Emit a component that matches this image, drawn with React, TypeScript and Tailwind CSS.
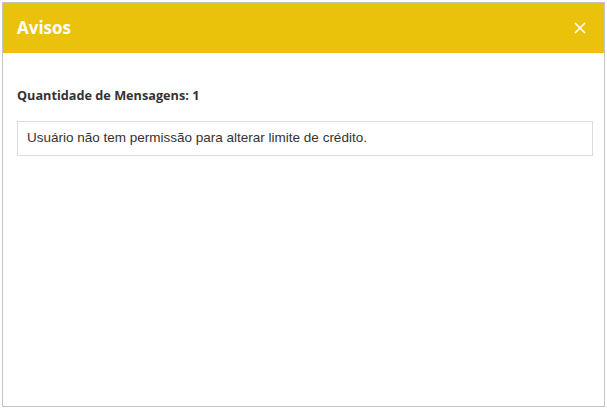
import React from "react";

export default function App() {
  return (
    <div className="w-[607px] h-[409px] bg-white p-[2px]">
      <div className="flex h-[405px] w-[603px] flex-col border border-[#c4c4c4] bg-white">
        <div className="flex h-[50px] items-center justify-between bg-[#ebc20b] pl-[14px] pr-[16px]">
          <h1 className="text-[17px] font-bold text-white" style={{ fontFamily: '"Open Sans", "Noto Sans", sans-serif' }}>
            Avisos
          </h1>
          <button className="flex h-4 w-4 items-center justify-center text-white">
            <svg width="12" height="12" viewBox="0 0 12 12" fill="none" stroke="currentColor" strokeWidth="1.6">
              <path d="M1 1 L11 11 M11 1 L1 11" />
            </svg>
          </button>
        </div>
        <div className="pl-[14px] pr-[11px] pt-[33px]">
          <p
            className="text-[12.7px] font-bold text-[#333]"
            style={{ fontFamily: '"Open Sans", "Noto Sans", sans-serif' }}
          >
            Quantidade de Mensagens: 1
          </p>
          <div
            className="mt-[16px] flex h-[35px] items-center border border-[#dcdcdc] px-[9px] text-[13.5px] text-[#333]"
            style={{ fontFamily: '"Liberation Sans", Arial, sans-serif' }}
          >
            Usuário não tem permissão para alterar limite de crédito.
          </div>
        </div>
      </div>
    </div>
  );
}
